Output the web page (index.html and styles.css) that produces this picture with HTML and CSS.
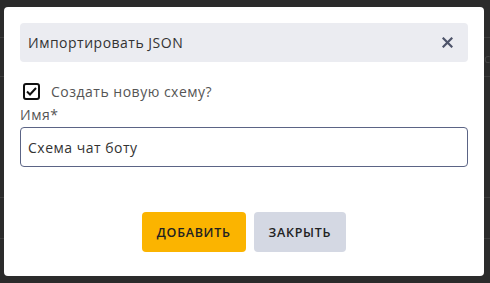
FILE: index.html
```html
<!DOCTYPE html>
<html lang="ru">
<head>
  <meta charset="UTF-8" />
  <title>Импортировать JSON</title>
  <link rel="stylesheet" href="styles.css">
</head>
<body>

<!-- backdrop rows -->
<div class="backdrop">
  <div class="bg-row" style="top: 37px"></div>
  <div class="bg-row" style="top: 76px"></div>
  <div class="bg-row" style="top: 197px"></div>
  <div class="bg-row" style="top: 238px"></div>
  <span class="bg-text">c</span>
</div>

<!-- Import modal -->
<div class="modal">
  <div class="modal-header">
    <span class="modal-title">Импортировать JSON</span>
    <button class="close-btn" aria-label="Закрыть">
      <svg width="11" height="11" viewBox="0 0 11 11">
        <path d="M1.5 1.5 L9.5 9.5 M9.5 1.5 L1.5 9.5" stroke="#4d5369" stroke-width="2.2" stroke-linecap="square"/>
      </svg>
    </button>
  </div>

  <label class="check-row">
    <span class="checkbox">
      <svg width="11" height="9" viewBox="0 0 11 9">
        <path d="M1 4.5 L4 7.5 L10 1" fill="none" stroke="#111" stroke-width="2"/>
      </svg>
    </span>
    <span class="check-label">Создать новую схему?</span>
  </label>

  <div class="field">
    <label class="field-label" for="name">Имя*</label>
    <input type="text" id="name" class="field-input" value="Схема чат боту" />
  </div>

  <div class="actions">
    <button class="btn btn-primary">Добавить</button>
    <button class="btn btn-secondary">Закрыть</button>
  </div>
</div>

</body>
</html>
```

FILE: styles.css
```css
body, html {
  margin: 0;
  background: #2b2b2b;
  font-family: 'Open Sans', 'Noto Sans', sans-serif;
  color: #333;
}

body {
  padding: 7px 6px 7px 4px;
  height: 283px;
  box-sizing: border-box;
  overflow: hidden;
}

.backdrop {
  position: fixed;
  inset: 0;
}

.bg-row {
  position: absolute;
  left: 0;
  right: 0;
  height: 1px;
  background: #3c3c3c;
}

.bg-text {
  position: absolute;
  left: 484px;
  top: 49px;
  font-size: 13px;
  color: #444;
}

.modal {
  position: relative;
  width: 480px;
  height: 269px;
  background: #ffffff;
  border-radius: 4px;
  padding: 16px;
  box-sizing: border-box;
  display: flex;
  flex-direction: column;
}

.modal-header {
  height: 39px;
  background: #ebecf1;
  border-radius: 4px;
  display: flex;
  align-items: center;
  justify-content: space-between;
  padding: 0 15px 0 8px;
}

.modal-title {
  font-size: 14px;
  letter-spacing: 0.5px;
  color: #333;
}

.close-btn {
  border: none;
  background: none;
  padding: 0;
  display: flex;
  cursor: pointer;
}

.check-row {
  display: flex;
  align-items: center;
  margin-top: 20px;
  margin-left: 3px;
}

.checkbox {
  width: 17px;
  height: 17px;
  box-sizing: border-box;
  border: 2px solid #111;
  border-radius: 3px;
  display: flex;
  align-items: center;
  justify-content: center;
}

.check-label {
  margin-left: 11px;
  font-size: 14px;
  letter-spacing: 0.5px;
  color: #555;
}

.field {
  display: flex;
  flex-direction: column;
  margin-top: 4px;
}

.field-label {
  font-size: 14px;
  letter-spacing: 0.5px;
  color: #555;
  line-height: 20px;
  margin-bottom: 2px;
}

.field-input {
  height: 40px;
  box-sizing: border-box;
  border: 1px solid #5b6485;
  border-radius: 4px;
  padding: 0 7px;
  font-family: inherit;
  font-size: 14px;
  letter-spacing: 0.5px;
  color: #333;
}

.actions {
  display: flex;
  justify-content: center;
  gap: 8px;
  margin-top: 45px;
}

.btn {
  height: 40px;
  border: none;
  border-radius: 4px;
  padding: 0 15px;
  font-family: inherit;
  font-size: 12.5px;
  font-weight: 600;
  text-transform: uppercase;
  letter-spacing: 0.7px;
  color: #222;
  cursor: pointer;
}

.btn-primary {
  background: #fbb400;
}

.btn-secondary {
  background: #d4d8e3;
}
```
